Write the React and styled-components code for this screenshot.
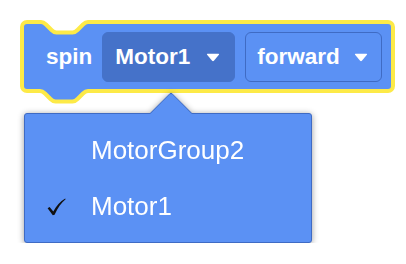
import React from "react";
import styled, { createGlobalStyle } from "styled-components";

const BLUE = "#5b91f4";
const DARK = "#4572c9";
const EDGE = "#3f6bc4";
const YELLOW = "#fdea47";

const GlobalStyle = createGlobalStyle`
  html, body { margin: 0; padding: 0; background: #ffffff; }
  body { font-family: "Liberation Sans", Arial, sans-serif; }
`;

const Page = styled.div`
  display: flex;
  flex-direction: column;
  align-items: flex-start;
  padding: 20px 0 0 20px;
`;

const Block = styled.div`
  position: relative;
  box-sizing: border-box;
  width: 375px;
  height: 73px;
  display: flex;
  align-items: center;
  gap: 10px;
  padding: 1px 12px 0 26px;
`;

const BlockShape = styled.svg`
  position: absolute;
  left: 0;
  top: 0;
  overflow: visible;
  z-index: 0;
`;

const Label = styled.span`
  position: relative;
  z-index: 1;
  color: #fff;
  font-weight: 700;
  font-size: 22.5px;
  line-height: 1;
`;

const Field = styled.div`
  position: relative;
  z-index: 1;
  box-sizing: border-box;
  height: 50px;
  display: flex;
  align-items: center;
  gap: ${(p) => (p.$selected ? "16px" : "14px")};
  padding: ${(p) => (p.$selected ? "0 14px 0 12px" : "0 13px 0 11px")};
  border-radius: 6px;
  background: ${(p) => (p.$selected ? DARK : BLUE)};
  border: 1px solid ${(p) => (p.$selected ? DARK : EDGE)};
  color: #fff;
  font-weight: 700;
  font-size: 22.5px;
`;

const MenuWrap = styled.div`
  margin: 20px 0 0 4px;
  filter: drop-shadow(0 1px 3px rgba(0, 0, 0, 0.4));
`;

const Menu = styled.div`
  position: relative;
  box-sizing: border-box;
  width: 288px;
  padding: 8px 0 8px 0;
  background: ${BLUE};
  border: 1px solid ${EDGE};
  border-radius: 3px;
`;

const Arrow = styled.div`
  position: absolute;
  left: 131px;
  top: -16px;
  width: 29px;
  height: 29px;
  background: ${BLUE};
  border-top: 1px solid ${EDGE};
  border-left: 1px solid ${EDGE};
  border-top-left-radius: 3px;
  transform: rotate(45deg);
`;

const Item = styled.div`
  position: relative;
  display: flex;
  align-items: center;
  height: 56px;
  padding-left: 22px;
  color: #fff;
  font-size: 26px;
  line-height: 56px;
`;

const CheckSlot = styled.span`
  width: 44px;
  display: flex;
  align-items: center;
  padding-top: 1px;
`;

const Caret = () => (
  <svg width="14" height="9" viewBox="0 0 14 9">
    <path
      d="M1.6 0.8 H12.4 Q13.6 0.8 12.9 1.8 L7.9 7.7 Q7 8.6 6.1 7.7 L1.1 1.8 Q0.4 0.8 1.6 0.8 Z"
      fill="#fff"
    />
  </svg>
);

const Check = () => (
  <svg width="19" height="18" viewBox="0 0 19 18">
    <path
      d="M0.6 10.2 L2.6 9 L6.3 13.6 C9.4 7.6 13 3.2 18.2 0.4 L18.6 1.2 C14.2 4.6 10.6 9.8 7.6 16.8 L5.8 17.3 Z"
      fill="#111"
    />
  </svg>
);

const shapePath =
  "M2 7 a5 5 0 0 1 5 -5 H21 c2.5 0 3.75 1.25 5 2.5 l5.5 5.5 c1.25 1.25 2.5 2.5 5 2.5 h16 c2.5 0 3.75 -1.25 5 -2.5 l5.5 -5.5 c1.25 -1.25 2.5 -2.5 5 -2.5 H368 a5 5 0 0 1 5 5 V66 a5 5 0 0 1 -5 5 H68 c-2.5 0 -3.75 1.25 -5 2.5 l-5.5 5.5 c-1.25 1.25 -2.5 2.5 -5 2.5 h-17 c-2.5 0 -3.75 -1.25 -5 -2.5 l-5.5 -5.5 c-1.25 -1.25 -2.5 -2.5 -5 -2.5 H7 a5 5 0 0 1 -5 -5 Z";

export default function App() {
  return (
    <>
      <GlobalStyle />
      <Page>
        <Block>
          <BlockShape width="375" height="86" viewBox="0 0 375 86">
            <path
              d={shapePath}
              fill={BLUE}
              stroke={YELLOW}
              strokeWidth="4"
              strokeLinejoin="round"
            />
          </BlockShape>
          <Label>spin</Label>
          <Field $selected>
            Motor1
            <Caret />
          </Field>
          <Field>
            forward
            <Caret />
          </Field>
        </Block>
        <MenuWrap>
          <Menu>
            <Arrow />
            <Item>
              <CheckSlot />
              MotorGroup2
            </Item>
            <Item>
              <CheckSlot>
                <Check />
              </CheckSlot>
              Motor1
            </Item>
          </Menu>
        </MenuWrap>
      </Page>
    </>
  );
}
